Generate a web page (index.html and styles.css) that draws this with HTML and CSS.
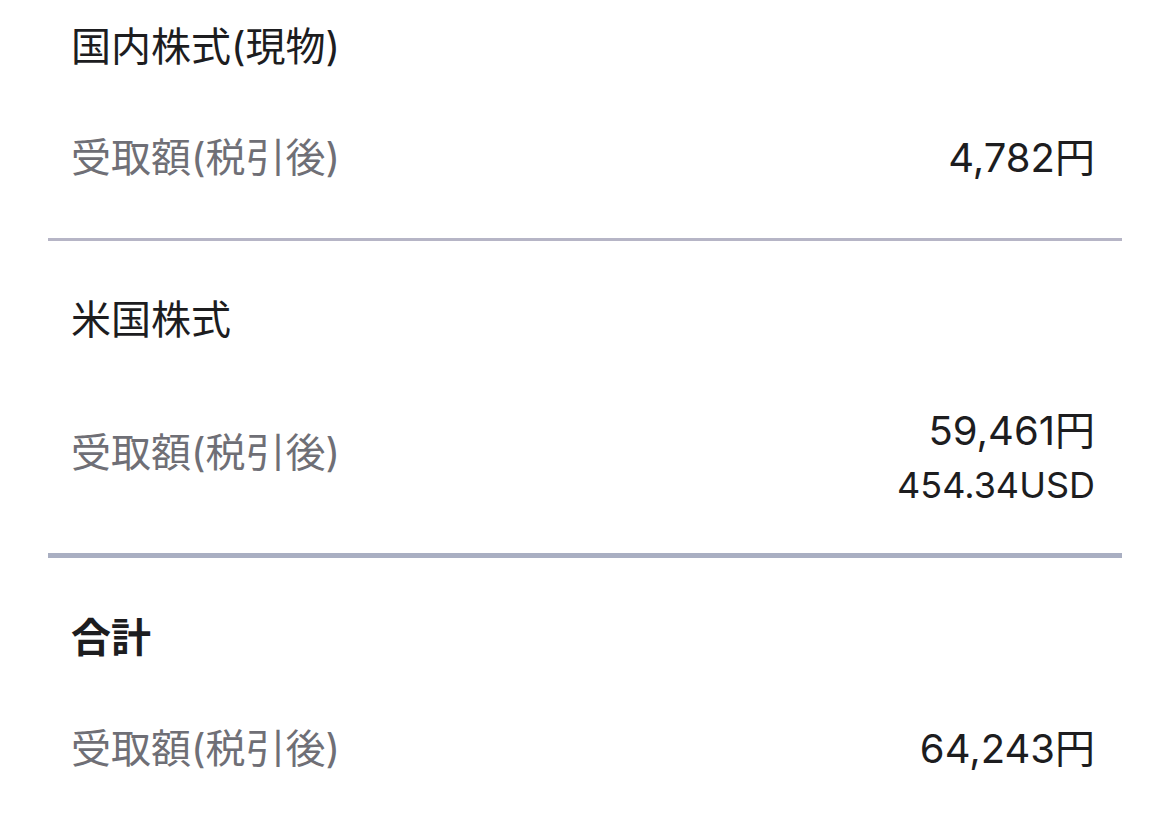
FILE: index.html
```html
<!DOCTYPE html>
<html lang="ja">
<head>
<meta charset="utf-8">
<title>受取額</title>
<link rel="stylesheet" href="styles.css">
</head>
<body>
<main class="list">
  <section class="group group--first">
    <h2 class="group-title">国内株式(現物)</h2>
    <div class="row">
      <span class="row-label">受取額(税引後)</span>
      <div class="row-values">
        <span class="amount">4,782円</span>
      </div>
    </div>
  </section>
  <hr class="divider divider--thin">
  <section class="group group--multi">
    <h2 class="group-title">米国株式</h2>
    <div class="row">
      <span class="row-label">受取額(税引後)</span>
      <div class="row-values">
        <span class="amount">59,461円</span>
        <span class="amount-sub">454.34USD</span>
      </div>
    </div>
  </section>
  <hr class="divider divider--thick">
  <section class="group">
    <h2 class="group-title group-title--bold">合計</h2>
    <div class="row">
      <span class="row-label">受取額(税引後)</span>
      <div class="row-values">
        <span class="amount">64,243円</span>
      </div>
    </div>
  </section>
</main>
</body>
</html>
```

FILE: styles.css
```css
html, body {
  margin: 0;
  padding: 0;
  background: #ffffff;
}

body {
  font-family: "Inter", "Noto Sans CJK JP", sans-serif;
  color: #1d1d1f;
  width: 1170px;
  height: 814px;
  overflow: hidden;
}

.list {
  padding: 0 48px;
}

.group {
  padding: 55px 27px 54px 23px;
}

.group--first {
  padding-top: 22px;
}

.group--multi {
  padding-top: 54px;
  padding-bottom: 46px;
}

.group-title {
  margin: 0;
  font-size: 40px;
  line-height: 50px;
  font-weight: 400;
  color: #1d1d1f;
}

.group-title--bold {
  font-weight: 700;
}

.row {
  display: flex;
  align-items: center;
  justify-content: space-between;
  margin-top: 60px;
}

.row-label {
  font-size: 40px;
  line-height: 52px;
  color: #6f6f76;
}

.group--multi .row-label {
  margin-bottom: 6px;
}

.row-values {
  display: flex;
  flex-direction: column;
  align-items: flex-end;
}

.amount {
  font-size: 40px;
  line-height: 52px;
  color: #1d1d1f;
}

.amount-sub {
  font-size: 36px;
  line-height: 44px;
  margin-top: 6px;
  color: #1d1d1f;
}

.divider {
  margin: 0;
  border: 0;
}

.divider--thin {
  height: 3px;
  background: #b6b5c6;
}

.divider--thick {
  height: 5px;
  background: #a9afc2;
}
```
